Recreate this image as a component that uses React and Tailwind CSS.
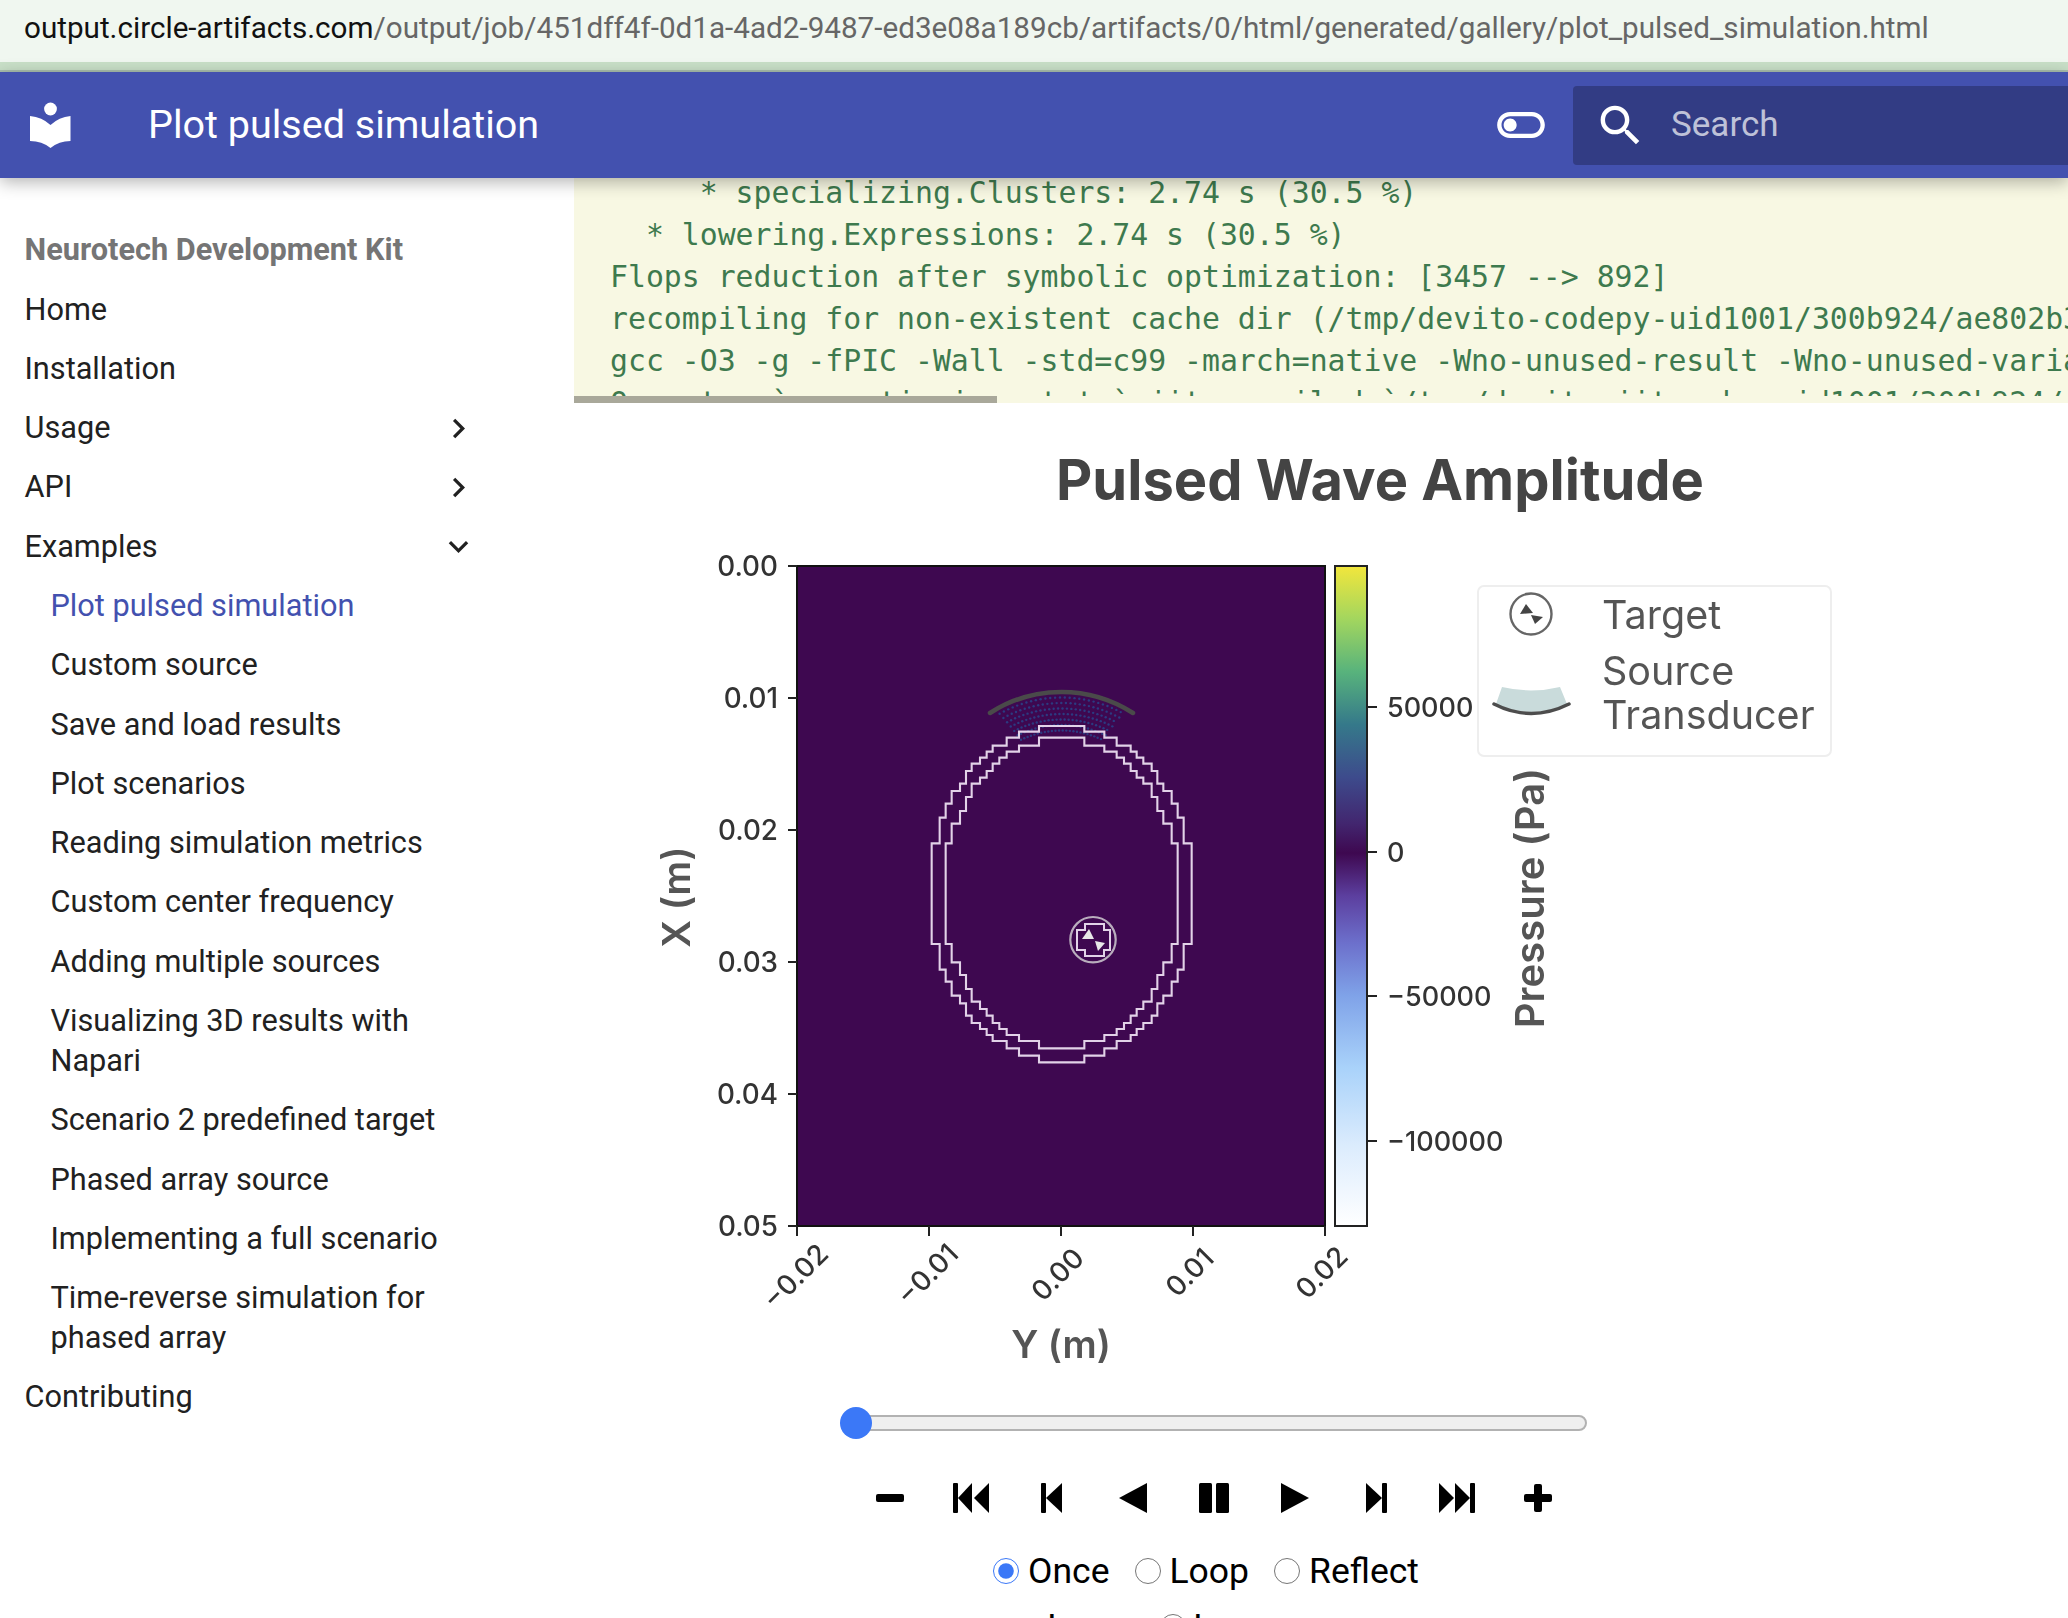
import { useMemo } from 'react';

const sidebarLinks = [
  { label: 'Home' },
  { label: 'Installation' },
  { label: 'Usage', icon: 'right' },
  { label: 'API', icon: 'right' },
  { label: 'Examples', icon: 'down' },
];

const exampleLinks = [
  'Plot pulsed simulation',
  'Custom source',
  'Save and load results',
  'Plot scenarios',
  'Reading simulation metrics',
  'Custom center frequency',
  'Adding multiple sources',
  'Visualizing 3D results with Napari',
  'Scenario 2 predefined target',
  'Phased array source',
  'Implementing a full scenario',
  'Time-reverse simulation for phased array',
];

const logLines = [
  '     * specializing.Clusters: 2.74 s (30.5 %)',
  '  * lowering.Expressions: 2.74 s (30.5 %)',
  'Flops reduction after symbolic optimization: [3457 --> 892]',
  'recompiling for non-existent cache dir (/tmp/devito-codepy-uid1001/300b924/ae802b3c1f6a.c)',
  'gcc -O3 -g -fPIC -Wall -std=c99 -march=native -Wno-unused-result -Wno-unused-variable -ffast-math',
  'Operator `acoustic_iso_state` jit-compiled `/tmp/devito-jitcache-uid1001/300b924/ae802b3.c`',
];

// right half of each skull contour, traced in 3x crop pixels
const outerHalf = [[553,198],[553,215],[613,215],[613,233],[650,233],[650,257],[692,257],[692,275],[710,275],[710,293],[730,293],[730,311],[755,311],[755,333],[772,333],[772,371],[790,371],[790,393],[815,393],[815,431],[833,431],[833,473],[851,473],[851,550],[875,550],[875,852],[851,852],[851,929],[833,929],[833,965],[815,965],[815,1007],[790,1007],[790,1030],[772,1030],[772,1067],[755,1067],[755,1089],[730,1089],[730,1107],[710,1107],[710,1125],[692,1125],[692,1143],[650,1143],[650,1165],[613,1165],[613,1187],[553,1187],[553,1207]];
const innerHalf = [[553,233],[553,257],[613,257],[613,275],[650,275],[650,293],[672,293],[672,311],[692,311],[692,333],[710,333],[710,353],[730,353],[730,371],[755,371],[755,411],[772,411],[772,453],[790,453],[790,491],[815,491],[815,550],[833,550],[833,852],[815,852],[815,907],[790,907],[790,945],[772,945],[772,987],[755,987],[755,1025],[730,1025],[730,1047],[710,1047],[710,1067],[692,1067],[692,1089],[672,1089],[672,1107],[650,1107],[650,1125],[613,1125],[613,1143],[553,1143],[553,1165]];

function contourPoints(half) {
  const right = half.map(([x, y]) => [900 + x / 3, 660 + y / 3]);
  const left = [...half].reverse().map(([x, y]) => [900 + (970 - x) / 3, 660 + y / 3]);
  return [...right, ...left].map((p) => p.join(',')).join(' ');
}

function MaterialIcon({ d, className }) {
  return (
    <svg viewBox="0 0 24 24" className={className} fill="currentColor">
      <path d={d} />
    </svg>
  );
}

function Sidebar() {
  return (
    <nav className="w-[574px] shrink-0 pt-[52px] font-['Roboto',sans-serif] text-[30.7px] leading-[40px] text-[#212121]">
      <div className="pb-[10px] pl-[24.5px] font-bold text-[#757575]">Neurotech Development Kit</div>
      {sidebarLinks.map((link) => (
        <div key={link.label} className="flex w-[478px] items-center justify-between py-[9.65px] pl-[24.5px]">
          <span>{link.label}</span>
          {link.icon === 'right' && (
            <MaterialIcon className="h-[39px] w-[39px]" d="M8.59 16.58 13.17 12 8.59 7.41 10 6l6 6-6 6z" />
          )}
          {link.icon === 'down' && (
            <MaterialIcon className="h-[39px] w-[39px]" d="M7.41 8.59 12 13.17l4.59-4.58L18 10l-6 6-6-6z" />
          )}
        </div>
      ))}
      {exampleLinks.map((label, i) => (
        <div key={label} className={`w-[470px] py-[9.65px] pl-[50.5px] ${i === 0 ? 'text-[#4351af]' : ''}`}>
          {label}
        </div>
      ))}
      <div className="py-[9.65px] pl-[24.5px]">Contributing</div>
    </nav>
  );
}

function PulsedPlot() {
  const dots = useMemo(() => {
    const out = [];
    for (let k = 1; k <= 7; k++) {
      const r = 132 - k * 5.5;
      const range = 30 - k * 0.6;
      for (let a = -range; a <= range; a += 2.2) {
        const t = (a * Math.PI) / 180;
        out.push([1061.7 + r * Math.sin(t), 824 - r * Math.cos(t)]);
      }
    }
    return out;
  }, []);

  const yTicks = ['0.00', '0.01', '0.02', '0.03', '0.04', '0.05'];
  const xTicks = [
    { label: '\u22120.02', x: 797, lx: 797, ly: 1278 },
    { label: '\u22120.01', x: 929, lx: 929, ly: 1276 },
    { label: '0.00', x: 1061, lx: 1059, ly: 1276 },
    { label: '0.01', x: 1193, lx: 1191, ly: 1274 },
    { label: '0.02', x: 1325, lx: 1323, ly: 1274 },
  ];
  const barTicks = [
    { label: '50000', y: 707 },
    { label: '0', y: 852 },
    { label: '\u221250000', y: 996 },
    { label: '\u2212100000', y: 1141 },
  ];

  return (
    <svg viewBox="574 403 1494 997" className="block h-[997px] w-[1494px] blur-[0.7px]">
      <defs>
        <linearGradient id="pressureBar" x1="0" y1="0" x2="0" y2="1">
          <stop offset="0" stopColor="#f2e63c" />
          <stop offset="0.08" stopColor="#a3d65e" />
          <stop offset="0.16" stopColor="#58b37c" />
          <stop offset="0.24" stopColor="#35798a" />
          <stop offset="0.32" stopColor="#3d4b8c" />
          <stop offset="0.39" stopColor="#42266f" />
          <stop offset="0.435" stopColor="#3e0850" />
          <stop offset="0.5" stopColor="#5c3f9f" />
          <stop offset="0.57" stopColor="#6c6fcb" />
          <stop offset="0.65" stopColor="#7fa2e8" />
          <stop offset="0.76" stopColor="#a9d2fa" />
          <stop offset="0.88" stopColor="#dcecfd" />
          <stop offset="1" stopColor="#ffffff" />
        </linearGradient>
      </defs>

      <text x="1380" y="500" textAnchor="middle" className="fill-[#444444] font-['Inter',sans-serif] text-[56px] font-bold">
        Pulsed Wave Amplitude
      </text>

      {/* heatmap */}
      <rect x="797" y="566" width="528" height="660" fill="#3e0850" stroke="#111111" strokeWidth="2" />
      {dots.map(([x, y], i) => (
        <circle key={i} cx={x} cy={y} r="1.2" fill="#2c3a80" />
      ))}
      <path d="M990 713 A132 132 0 0 1 1133 713" fill="none" stroke="#4a4a4a" strokeWidth="4.5" strokeLinecap="round" />
      <polygon points={contourPoints(outerHalf)} fill="none" stroke="#e2d2e8" strokeWidth="2.1" />
      <polygon points={contourPoints(innerHalf)} fill="none" stroke="#e2d2e8" strokeWidth="2.1" />

      {/* target */}
      <circle cx="1093" cy="939.7" r="22.7" fill="none" stroke="#b9adbd" strokeWidth="2.2" />
      <polygon
        points="1085,924 1104,924 1104,930 1110,930 1110,950 1104,950 1104,956 1085,956 1085,950 1077,950 1077,930 1085,930"
        fill="none"
        stroke="#e2d2e8"
        strokeWidth="2"
      />
      <polygon points="1082,939 1089,929 1094,939" fill="#e8e8e8" />
      <polygon points="1095,941 1105,943 1098,951" fill="#e8e8e8" />

      {/* y axis */}
      {yTicks.map((label, i) => (
        <g key={label}>
          <line x1="788" x2="797" y1={566 + i * 132} y2={566 + i * 132} stroke="#222222" strokeWidth="2" />
          <text x="778" y={576 + i * 132} textAnchor="end" className="fill-[#333333] font-['Inter',sans-serif] text-[27.8px] font-medium">
            {label}
          </text>
        </g>
      ))}
      <text
        x="679"
        y="897"
        textAnchor="middle"
        dominantBaseline="middle"
        transform="rotate(-90 679 897)"
        className="fill-[#555555] font-['Inter',sans-serif] text-[38.5px] font-semibold"
      >
        X (m)
      </text>

      {/* x axis */}
      {xTicks.map((t) => (
        <g key={t.label}>
          <line x1={t.x} x2={t.x} y1="1226" y2="1236" stroke="#222222" strokeWidth="2" />
          <text
            x={t.lx}
            y={t.ly}
            textAnchor="middle"
            dominantBaseline="middle"
            transform={`rotate(-45 ${t.lx} ${t.ly})`}
            className="fill-[#333333] font-['Inter',sans-serif] text-[27.8px] font-medium"
          >
            {t.label}
          </text>
        </g>
      ))}
      <text x="1061" y="1358" textAnchor="middle" className="fill-[#555555] font-['Inter',sans-serif] text-[38px] font-semibold">
        Y (m)
      </text>

      {/* colorbar */}
      <rect x="1335" y="566" width="32" height="660" fill="url(#pressureBar)" stroke="#222222" strokeWidth="2" />
      {barTicks.map((t) => (
        <g key={t.label}>
          <line x1="1367" x2="1377" y1={t.y} y2={t.y} stroke="#222222" strokeWidth="2" />
          <text x="1387" y={t.y + 10} className="fill-[#333333] font-['Inter',sans-serif] text-[27px] font-medium">
            {t.label}
          </text>
        </g>
      ))}
      <text
        x="1533"
        y="898"
        textAnchor="middle"
        dominantBaseline="middle"
        transform="rotate(-90 1533 898)"
        className="fill-[#555555] font-['Inter',sans-serif] text-[40px] font-semibold"
      >
        Pressure (Pa)
      </text>

      {/* legend */}
      <rect x="1478" y="586" width="353" height="170" rx="6" fill="#ffffff" stroke="#eeeeee" strokeWidth="2" />
      <circle cx="1531" cy="614" r="20.5" fill="none" stroke="#666666" strokeWidth="2.4" />
      <polygon points="1520,614 1526,604 1533,613" fill="#444444" />
      <polygon points="1531,615 1543,617 1535,624" fill="#444444" />
      <path d="M1502 687 Q1531 694 1560 687 L1567 704 Q1531 720 1496 704 Z" fill="#c9dbdb" />
      <path d="M1494 704 Q1531 723 1569 704" fill="none" stroke="#4d4d4d" strokeWidth="3.5" strokeLinecap="round" />
      <g className="fill-[#555555] font-['Inter',sans-serif] text-[39.5px]">
        <text x="1602" y="629">Target</text>
        <text x="1602" y="685">Source</text>
        <text x="1602" y="729">Transducer</text>
      </g>
    </svg>
  );
}

function Ctl({ children, viewBox = '0 0 36 30' }) {
  return (
    <button className="flex h-[30px] w-[81px] items-center justify-center">
      <svg viewBox={viewBox} className="h-[30px] w-[36px]" fill="#000000">
        {children}
      </svg>
    </button>
  );
}

function Radio({ label, checked }) {
  return (
    <label className="flex items-center gap-[9px]">
      <input type="radio" readOnly checked={checked} name="loop" className="m-0 h-[26px] w-[26px] accent-[#3b78f7]" />
      <span>{label}</span>
    </label>
  );
}

function AnimationControls() {
  return (
    <div className="flex w-[1280px] flex-col items-center font-['Roboto',sans-serif] text-black">
      {/* slider */}
      <div className="relative ml-[-1px] mt-[7px] h-[32px] w-[747px]">
        <div className="absolute left-[16px] right-0 top-[8px] h-[16px] rounded-full border-2 border-[#b2b2b2] bg-[#efefef]" />
        <div className="absolute left-0 top-0 h-[32px] w-[32px] rounded-full bg-[#3b78f7]" />
      </div>

      {/* transport buttons */}
      <div className="mt-[44px] flex h-[30px] items-center">
        <Ctl>
          <rect x="4" y="11" width="28" height="8" rx="2" />
        </Ctl>
        <Ctl>
          <rect x="0" y="0" width="5" height="30" rx="1" />
          <polygon points="5,15 19,0 19,30" />
          <polygon points="21,15 36,0 36,30" />
        </Ctl>
        <Ctl>
          <rect x="7" y="0" width="5" height="30" rx="1" />
          <polygon points="12,15 28,0 28,30" />
        </Ctl>
        <Ctl>
          <polygon points="4,15 32,0 32,30" />
        </Ctl>
        <Ctl>
          <rect x="3" y="0" width="13" height="30" rx="1.5" />
          <rect x="20" y="0" width="13" height="30" rx="1.5" />
        </Ctl>
        <Ctl>
          <polygon points="4,0 32,15 4,30" />
        </Ctl>
        <Ctl>
          <polygon points="8,0 24,15 8,30" />
          <rect x="24" y="0" width="5" height="30" rx="1" />
        </Ctl>
        <Ctl>
          <polygon points="0,0 15,15 0,30" />
          <polygon points="16,0 31,15 16,30" />
          <rect x="31" y="0" width="5" height="30" rx="1" />
        </Ctl>
        <Ctl>
          <rect x="14" y="1" width="8" height="28" rx="2" />
          <rect x="4" y="11" width="28" height="8" rx="2" />
        </Ctl>
      </div>

      {/* loop mode */}
      <div className="ml-[-16px] mt-[34px] flex items-center gap-[25px] text-[35.5px] leading-[48px]">
        <Radio label="Once" checked />
        <Radio label="Loop" />
        <Radio label="Reflect" />
      </div>

      {/* next row, cut off by the window */}
      <div className="ml-[-102px] mt-[8px] flex items-center gap-[7px] text-[35.5px] leading-[48px]">
        <span className="w-[106px]">Lower</span>
        <input type="radio" readOnly name="order" className="m-0 h-[26px] w-[26px]" />
        <span>Layer</span>
      </div>
    </div>
  );
}

export default function App() {
  return (
    <div className="h-[1618px] w-[2068px] overflow-hidden bg-white">
      {/* Browser address bar */}
      <div className="flex h-[62px] items-center bg-[#f0f7f0] pb-[6px] pl-[24px] font-['Roboto',sans-serif] text-[29.65px] whitespace-nowrap text-[#666666]">
        <span className="text-[#111111]">output.circle-artifacts.com</span>
        /output/job/451dff4f-0d1a-4ad2-9487-ed3e08a189cb/artifacts/0/html/generated/gallery/plot_pulsed_simulation.html
      </div>
      <div className="h-[10px] border-b-2 border-[#a9bfae] bg-[#c9e0c8]" />

      {/* Header */}
      <header className="relative z-10 flex h-[106px] items-center bg-[#4351af] pl-[30px] font-['Roboto',sans-serif] text-white shadow-[0_4px_16px_rgba(0,0,0,0.3)]">
        <svg viewBox="30 101 41 47" className="h-[47px] w-[41px] shrink-0" fill="#ffffff">
          <circle cx="50.5" cy="108" r="6.4" />
          <path d="M30 115 Q42 116 50.5 124 Q59 116 70.5 115 V140 Q59 140 50.5 147 Q42 140 30 140 Z" />
        </svg>
        <div className="ml-[77px] flex-1 text-[39.5px]">Plot pulsed simulation</div>
        <MaterialIcon
          className="mr-[26px] h-[52px] w-[52px]"
          d="M17 6H7c-3.31 0-6 2.69-6 6s2.69 6 6 6h10c3.31 0 6-2.69 6-6s-2.69-6-6-6zm0 10H7c-2.21 0-4-1.79-4-4s1.79-4 4-4h10c2.21 0 4 1.79 4 4s-1.79 4-4 4zM7 9c-1.66 0-3 1.34-3 3s1.34 3 3 3 3-1.34 3-3-1.34-3-3-3z"
        />
        <div className="flex h-[79px] w-[495px] items-center gap-[24px] rounded-l-[4px] bg-[#323c84] pl-[21px]">
          <MaterialIcon
            className="h-[53px] w-[53px]"
            d="M9.5 3A6.5 6.5 0 0 1 16 9.5c0 1.61-.59 3.09-1.56 4.23l.27.27h.79l5 5-1.5 1.5-5-5v-.79l-.27-.27A6.516 6.516 0 0 1 9.5 16 6.5 6.5 0 0 1 3 9.5 6.5 6.5 0 0 1 9.5 3m0 2C7 5 5 7 5 9.5S7 14 9.5 14 14 12 14 9.5 12 5 9.5 5z"
          />
          <span className="text-[35px] text-white/70">Search</span>
        </div>
      </header>

      <div className="flex">
        <Sidebar />

        <main className="min-w-0 flex-1">
          {/* Captured stdout */}
          <div className="relative h-[225px] bg-[#f8f8e3]">
            <div className="h-[218px] overflow-hidden">
              <pre className="mt-[-6px] pl-[36px] font-['DejaVu_Sans_Mono',monospace] text-[29.8px] leading-[42px] text-[#3e7a4e]">
                {logLines.join('\n')}
              </pre>
            </div>
            <div className="absolute bottom-0 left-0 h-[7px] w-[423px] bg-[#a9a89a]" />
          </div>

          <PulsedPlot />
          <AnimationControls />
        </main>
      </div>
    </div>
  );
}
